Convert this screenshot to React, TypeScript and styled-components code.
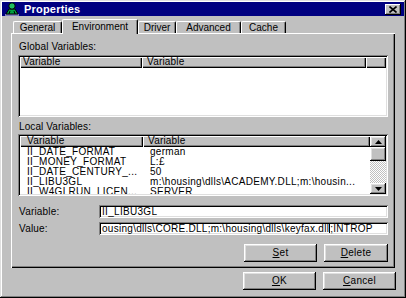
import React from "react";
import styled, { createGlobalStyle } from "styled-components";

const GlobalStyle = createGlobalStyle`
  html, body { margin: 0; padding: 0; background: #c0c0c0; }
  body { font-family: "Liberation Sans", Arial, sans-serif; font-size: 10px; color: #000; }
  * { box-sizing: border-box; }
`;

const raised = `
  box-shadow: inset -1px -1px #000, inset 1px 1px #fff, inset -2px -2px #808080, inset 2px 2px #dfdfdf;
`;
const sunken = `
  box-shadow: inset 1px 1px #808080, inset -1px -1px #fff, inset 2px 2px #000, inset -2px -2px #dfdfdf;
`;

const Window = styled.div`
  width: 406px;
  height: 298px;
  background: #c0c0c0;
  padding: 2px;
  box-shadow: inset -1px -1px #000, inset 1px 1px #dfdfdf, inset -2px -2px #808080, inset 2px 2px #fff;
  display: flex;
  flex-direction: column;
`;

const TitleBar = styled.div`
  height: 14px;
  background: #000080;
  display: flex;
  align-items: center;
  padding: 0 3px 0 1px;
  color: #fff;
`;

const TitleText = styled.span`
  flex: 1;
  margin-left: 3px;
  font-size: 11px;
  font-weight: bold;
  letter-spacing: 0.2px;
  line-height: 14px;
`;

const CloseButton = styled.div`
  width: 16px;
  height: 11px;
  background: #c0c0c0;
  box-shadow: inset -1px -1px #000, inset 1px 1px #fff, inset -2px -2px #808080;
  display: flex;
  align-items: center;
  justify-content: center;
`;

const TabStrip = styled.div`
  display: flex;
  align-items: flex-end;
  height: 14px;
  margin: 3px 0 0 11px;
  position: relative;
  z-index: 1;
`;

const Tab = styled.div<{ $w: number; $active?: boolean }>`
  width: ${(p) => p.$w}px;
  height: ${(p) => (p.$active ? 15 : 12)}px;
  margin-bottom: ${(p) => (p.$active ? -1 : 0)}px;
  background: #c0c0c0;
  border-top: 1px solid #fff;
  border-left: 1px solid #fff;
  border-right: 1px solid #000;
  border-radius: 2px 2px 0 0;
  box-shadow: inset -1px 0 #808080;
  display: flex;
  justify-content: center;
  padding-top: ${(p) => (p.$active ? 2 : 1)}px;
  line-height: 10px;
  white-space: nowrap;
`;

const Panel = styled.div`
  margin: 0 9px;
  height: 235px;
  background: #c0c0c0;
  box-shadow: inset 1px 1px #fff, inset -1px -1px #000, inset -2px -2px #808080;
  padding: 8px 7px 6px 7px;
  display: flex;
  flex-direction: column;
`;

const GroupLabel = styled.div<{ $mt: number }>`
  height: 12px;
  line-height: 12px;
  padding-left: 1px;
  margin-top: ${(p) => p.$mt}px;
  letter-spacing: 0.1px;
`;

const ListBox = styled.div<{ $mt: number }>`
  margin-top: ${(p) => p.$mt}px;
  height: 62px;
  background: #fff;
  padding: 2px;
  ${sunken}
  display: flex;
  overflow: hidden;
`;

const ListMain = styled.div`
  flex: 1;
  min-width: 0;
  display: flex;
  flex-direction: column;
  overflow: hidden;
`;

const Header = styled.div`
  display: flex;
  height: 11px;
  flex-shrink: 0;
`;

const HeaderCell = styled.div<{ $w?: number; $pl: number }>`
  ${(p) => (p.$w ? `width: ${p.$w}px;` : "flex: 1;")}
  height: 11px;
  background: #c0c0c0;
  box-shadow: inset 1px 1px #fff, inset -1px -1px #000, inset -2px -2px #808080;
  padding-left: ${(p) => p.$pl}px;
  line-height: 10px;
  white-space: nowrap;
  overflow: hidden;
  letter-spacing: 0.2px;
`;

const Row = styled.div`
  display: grid;
  grid-template-columns: 123px 1fr;
  height: 10px;
  line-height: 10px;
  white-space: nowrap;
  flex-shrink: 0;
  letter-spacing: 0.3px;
`;

const Cell = styled.div`
  padding-left: 7px;
  overflow: hidden;
`;

const ScrollBar = styled.div`
  width: 16px;
  display: flex;
  flex-direction: column;
`;

const ScrollButton = styled.div<{ $h: number }>`
  height: ${(p) => p.$h}px;
  background: #c0c0c0;
  ${raised}
  display: flex;
  align-items: center;
  justify-content: center;
  flex-shrink: 0;
`;

const Thumb = styled.div`
  height: 14px;
  background: #c0c0c0;
  ${raised}
  flex-shrink: 0;
`;

const Track = styled.div`
  flex: 1;
  background: repeating-conic-gradient(#c0c0c0 0 25%, #fff 0 50%) 0 0 / 2px 2px;
`;

const FieldRow = styled.div<{ $mt: number }>`
  display: grid;
  grid-template-columns: 81px 1fr;
  align-items: center;
  height: 13px;
  margin-top: ${(p) => p.$mt}px;
`;

const FieldLabel = styled.div`
  padding-left: 1px;
  letter-spacing: 0.2px;
`;

const TextBox = styled.div<{ $ls: number }>`
  height: 13px;
  background: #fff;
  ${sunken}
  padding: 2px 2px 2px 3px;
  line-height: 9px;
  white-space: nowrap;
  overflow: hidden;
  letter-spacing: ${(p) => p.$ls}px;
`;

const Caret = styled.span`
  display: inline-block;
  width: 1px;
  height: 9px;
  background: #000;
  vertical-align: top;
`;

const ButtonRow = styled.div<{ $mt: number; $pr: number }>`
  display: flex;
  justify-content: flex-end;
  gap: 7px;
  margin-top: ${(p) => p.$mt}px;
  padding-right: ${(p) => p.$pr}px;
`;

const Button = styled.div<{ $w: number; $h: number }>`
  width: ${(p) => p.$w}px;
  height: ${(p) => p.$h}px;
  background: #c0c0c0;
  ${raised}
  display: flex;
  align-items: center;
  justify-content: center;
  letter-spacing: 0.3px;
  padding-bottom: 1px;
`;

const Key = styled.span`
  text-decoration: underline;
`;

const AppIcon = () => (
  <svg width="18" height="14" viewBox="0 0 18 14">
    <path d="M2 13 L16 13" stroke="#fff" strokeWidth="1" />
    <path d="M3 12 L6 7 L12 7 L15 12 Z" fill="#00a040" stroke="#000" strokeWidth="1" />
    <circle cx="9" cy="4" r="3.2" fill="#20c060" stroke="#000" strokeWidth="1" />
    <path d="M6 12 L7 9 M12 12 L11 9" stroke="#000" strokeWidth="1" />
  </svg>
);

const CloseGlyph = () => (
  <svg width="8" height="7" viewBox="0 0 8 7">
    <path d="M0.5 0.5 L7.5 6.5 M7.5 0.5 L0.5 6.5" stroke="#000" strokeWidth="1.6" />
  </svg>
);

const UpArrow = () => (
  <svg width="7" height="4" viewBox="0 0 7 4">
    <path d="M3.5 0 L7 4 L0 4 Z" fill="#000" />
  </svg>
);

const DownArrow = () => (
  <svg width="7" height="4" viewBox="0 0 7 4">
    <path d="M0 0 L7 0 L3.5 4 Z" fill="#000" />
  </svg>
);

const localRows: [string, string][] = [
  ["II_DATE_FORMAT", "german"],
  ["II_MONEY_FORMAT", "L:£"],
  ["II_DATE_CENTURY_...", "50"],
  ["II_LIBU3GL", "m:\\housing\\dlls\\ACADEMY.DLL;m:\\housin..."],
  ["II_W4GLRUN_LICEN...", "SERVER"],
];

const tabs: { label: string; w: number; active?: boolean }[] = [
  { label: "General", w: 49 },
  { label: "Environment", w: 76, active: true },
  { label: "Driver", w: 38 },
  { label: "Advanced", w: 65 },
  { label: "Cache", w: 45 },
];

export default function App() {
  return (
    <>
      <GlobalStyle />
      <Window>
        <TitleBar>
          <AppIcon />
          <TitleText>Properties</TitleText>
          <CloseButton>
            <CloseGlyph />
          </CloseButton>
        </TitleBar>
        <TabStrip>
          {tabs.map((t) => (
            <Tab key={t.label} $w={t.w} $active={t.active}>
              {t.label}
            </Tab>
          ))}
        </TabStrip>
        <Panel>
          <GroupLabel $mt={0}>Global Variables:</GroupLabel>
          <ListBox $mt={2}>
            <ListMain>
              <Header>
                <HeaderCell $w={122} $pl={3}>Variable</HeaderCell>
                <HeaderCell $w={224} $pl={5}>Variable</HeaderCell>
                <HeaderCell $pl={0} />
              </Header>
            </ListMain>
          </ListBox>
          <GroupLabel $mt={4}>Local Variables:</GroupLabel>
          <ListBox $mt={1}>
            <ListMain>
              <Header>
                <HeaderCell $w={123} $pl={7}>Variable</HeaderCell>
                <HeaderCell $pl={5}>Variable</HeaderCell>
              </Header>
              {localRows.map(([k, v]) => (
                <Row key={k}>
                  <Cell>{k}</Cell>
                  <Cell>{v}</Cell>
                </Row>
              ))}
            </ListMain>
            <ScrollBar>
              <ScrollButton $h={11}>
                <UpArrow />
              </ScrollButton>
              <Thumb />
              <Track />
              <ScrollButton $h={11}>
                <DownArrow />
              </ScrollButton>
            </ScrollBar>
          </ListBox>
          <FieldRow $mt={9}>
            <FieldLabel>Variable:</FieldLabel>
            <TextBox $ls={0.3}>II_LIBU3GL</TextBox>
          </FieldRow>
          <FieldRow $mt={4}>
            <FieldLabel>Value:</FieldLabel>
            <TextBox $ls={0.28}>
              ousing\dlls\CORE.DLL;m:\housing\dlls\keyfax.dll
              <Caret />
              ;INTROP
            </TextBox>
          </FieldRow>
          <ButtonRow $mt={9} $pr={0}>
            <Button $w={73} $h={18}>
              <Key>S</Key>et
            </Button>
            <Button $w={64} $h={18}>
              <Key>D</Key>elete
            </Button>
          </ButtonRow>
        </Panel>
        <ButtonRow $mt={4} $pr={8}>
          <Button $w={73} $h={18}>
            <Key>O</Key>K
          </Button>
          <Button $w={73} $h={18}>
            <Key>C</Key>ancel
          </Button>
        </ButtonRow>
      </Window>
    </>
  );
}
